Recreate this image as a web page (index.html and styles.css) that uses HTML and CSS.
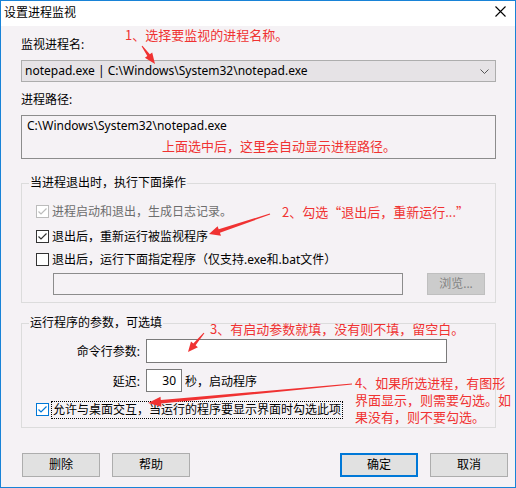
FILE: index.html
```html
<!DOCTYPE html>
<html lang="zh-CN">
<head>
    <meta charset="UTF-8">
    <title>设置进程监视</title>
    <link rel="stylesheet" href="styles.css">
</head>
<body>
    <div class="window">
        <div class="titlebar">
            <span class="title">设置进程监视</span>
            <svg class="close" width="11" height="11" viewBox="0 0 11 11">
                <path d="M0.5 0.5 L10.5 10.5 M10.5 0.5 L0.5 10.5" stroke="#000" stroke-width="1.1" fill="none"/>
            </svg>
        </div>

        <div class="content">
            <div class="label">监视进程名:</div>
            <div class="combo">
                <span>notepad.exe | C:\Windows\System32\notepad.exe</span>
                <svg width="9" height="5" viewBox="0 0 9 5">
                    <path d="M0.5 0.5 L4.5 4.5 L8.5 0.5" stroke="#555" stroke-width="1" fill="none"/>
                </svg>
            </div>

            <div class="label label-path">进程路径:</div>
            <div class="pathbox">
                <div>C:\Windows\System32\notepad.exe</div>
                <div class="note-inline">上面选中后，这里会自动显示进程路径。</div>
            </div>

            <div class="group group-exit">
                <div class="group-title">当进程退出时，执行下面操作</div>
                <div class="check-row row-log disabled">
                    <span class="box checked"><svg width="11" height="11" viewBox="0 0 11 11"><path d="M1.5 5.5 L4 8 L9.5 2.5" fill="none" stroke-width="1.2"/></svg></span>
                    <span class="text">进程启动和退出，生成日志记录。</span>
                </div>
                <div class="check-row row-restart">
                    <span class="box checked"><svg width="11" height="11" viewBox="0 0 11 11"><path d="M1.5 5.5 L4 8 L9.5 2.5" fill="none" stroke-width="1.2"/></svg></span>
                    <span class="text">退出后，重新运行被监视程序</span>
                </div>
                <div class="check-row row-run">
                    <span class="box"></span>
                    <span class="text">退出后，运行下面指定程序（仅支持.exe和.bat文件）</span>
                </div>
                <div class="file-row">
                    <div class="file-input"></div>
                    <div class="btn btn-disabled">浏览...</div>
                </div>
            </div>

            <div class="group group-args">
                <div class="group-title">运行程序的参数，可选填</div>
                <div class="field-row row-cmd">
                    <span class="field-label">命令行参数:</span>
                    <div class="input input-cmd"></div>
                </div>
                <div class="field-row row-delay">
                    <span class="field-label">延迟:</span>
                    <div class="input input-delay">30</div>
                    <span class="field-after">秒，启动程序</span>
                </div>
                <div class="check-row row-desktop focused">
                    <span class="box checked"><svg width="11" height="11" viewBox="0 0 11 11"><path d="M1.5 5.5 L4 8 L9.5 2.5" fill="none" stroke-width="1.2"/></svg></span>
                    <span class="text focus-text">允许与桌面交互，当运行的程序要显示界面时勾选此项</span>
                </div>
            </div>

            <div class="buttons">
                <div class="btn-group">
                    <div class="btn">删除</div>
                    <div class="btn">帮助</div>
                </div>
                <div class="btn-group">
                    <div class="btn btn-default">确定</div>
                    <div class="btn">取消</div>
                </div>
            </div>
        </div>

        <div class="annotations">
            <div class="note note1">1、选择要监视的进程名称。</div>
            <div class="note note2">2、勾选“退出后，重新运行...”</div>
            <div class="note note3">3、有启动参数就填，没有则不填，留空白。</div>
            <div class="note note4">4、如果所选进程，有图形<br>界面显示，则需要勾选。如<br>果没有，则不要勾选。</div>
            <svg class="arrows" width="516" height="488" viewBox="0 0 516 488">
                <polygon points="141.6,46.3 147.3,56 144.9,57.7 155,64 152.2,52.4 149.8,54.2 142.4,45.7"/>
                <polygon points="269.8,213.5 218.7,229.3 217.6,226.3 209,234 221,235.7 219.9,232.7 270.2,214.5"/>
                <polygon points="203.6,332.7 193.3,343.4 191,341.4 188,352 197.9,347.2 195.6,345.3 204.4,333.3"/>
                <polygon points="352,383.5 160.8,400 160.5,396.8 148,403 161.4,406.8 161.1,403.6 352,384.5"/>
            </svg>
        </div>
    </div>
</body>
</html>
```

FILE: styles.css
```css
body {
    margin: 0;
    font-family: "Noto Sans", "Noto Sans CJK SC", sans-serif;
    font-size: 12px;
    color: #000;
}
.window {
    position: relative;
    width: 516px;
    height: 488px;
    box-sizing: border-box;
    border: 1px solid #1883d7;
    background-color: #f5f2f5;
    overflow: hidden;
}
.titlebar {
    height: 25px;
    background-color: #fff;
    display: flex;
    align-items: center;
    justify-content: space-between;
    padding: 0 9px 0 3px;
}
.title {
    line-height: 24px;
    margin-top: -1px;
}
.close {
    margin-top: -4px;
}
.content {
    padding: 11px 19px 0 20px;
}
.label {
    line-height: 16px;
    height: 16px;
}
.combo {
    margin-top: 7px;
    height: 22px;
    box-sizing: border-box;
    border: 1px solid #adadad;
    background-color: #e6e3e6;
    display: flex;
    align-items: center;
    justify-content: space-between;
    padding: 0 6px 0 3px;
    line-height: 20px;
}
.label-path {
    margin-top: 10px;
}
.pathbox {
    margin-top: 7px;
    height: 44px;
    box-sizing: border-box;
    border: 1px solid #8c8c8c;
    padding: 2px 5px;
    line-height: 16px;
}
.note-inline {
    margin-top: 4px;
    padding-left: 135px;
    color: #f03232;
    font-family: "Noto Sans CJK SC", sans-serif;
    font-size: 13px;
}
.group {
    border: 1px solid #dcdcdc;
}
.group-exit {
    margin-top: 24px;
    padding-bottom: 7px;
}
.group-args {
    margin-top: 20px;
    padding-bottom: 8px;
}
.group-title {
    width: fit-content;
    margin: -9px 0 0 7px;
    padding: 0 1px;
    height: 16px;
    line-height: 16px;
    background-color: #f5f2f5;
}
.check-row {
    display: flex;
    align-items: flex-start;
    height: 16px;
    line-height: 16px;
}
.box {
    width: 13px;
    height: 13px;
    box-sizing: border-box;
    border: 1px solid #333;
    background-color: #fff;
    margin: 1px 0 0 14px;
    flex-shrink: 0;
}
.box svg {
    display: block;
}
.box path {
    stroke: #333;
}
.check-row .text {
    margin-left: 3px;
}
.disabled .box {
    border-color: #bcbcbc;
}
.disabled .box path {
    stroke: #bcbcbc;
}
.disabled .text {
    color: #6d6d6d;
}
.row-log {
    margin-top: 13px;
}
.row-restart {
    margin-top: 9px;
}
.row-run {
    margin-top: 7px;
}
.file-row {
    margin-top: 5px;
    padding-left: 31px;
    display: flex;
    gap: 24px;
}
.file-input {
    width: 350px;
    height: 22px;
    box-sizing: border-box;
    border: 1px solid #8c8c8c;
}
.btn {
    width: 78px;
    height: 24px;
    box-sizing: border-box;
    border: 1px solid #adadad;
    background-color: #e1e1e1;
    text-align: center;
    line-height: 22px;
}
.btn-disabled {
    width: 58px;
    height: 22px;
    line-height: 20px;
    background-color: #cccccc;
    border-color: #bfbfbf;
    color: #838383;
}
.btn-default {
    border: 2px solid #0078d7;
    line-height: 20px;
}
.field-row {
    display: flex;
    align-items: center;
}
.field-label {
    width: 118px;
    text-align: right;
    margin-right: 6px;
}
.input {
    box-sizing: border-box;
    border: 1px solid #7a7a7a;
    background-color: #fff;
}
.row-cmd {
    margin-top: 8px;
}
.input-cmd {
    width: 301px;
    height: 24px;
}
.row-delay {
    margin-top: 6px;
}
.input-delay {
    width: 36px;
    height: 23px;
    line-height: 21px;
    text-align: right;
    padding-right: 5px;
}
.field-after {
    margin-left: 3px;
}
.row-desktop {
    margin-top: 9px;
    height: 18px;
}
.row-desktop .box {
    margin-top: 2px;
    border-color: #0078d7;
}
.row-desktop .box path {
    stroke: #0078d7;
}
.row-desktop .focus-text {
    margin-left: 2px;
    border: 1px dotted #000;
    padding: 0 1px;
}
.buttons {
    margin: 25px -12px 0 1px;
    display: flex;
    justify-content: space-between;
}
.btn-group {
    display: flex;
    gap: 12px;
}
.annotations {
    position: absolute;
    top: -1px;
    left: -1px;
    width: 516px;
    height: 488px;
    pointer-events: none;
}
.note {
    position: absolute;
    color: #f03232;
    font-family: "Noto Sans CJK SC", sans-serif;
    font-size: 13px;
    line-height: 16px;
    white-space: nowrap;
}
.note1 {
    left: 125px;
    top: 27px;
}
.note2 {
    left: 282px;
    top: 204px;
}
.note3 {
    left: 210px;
    top: 321px;
}
.note4 {
    left: 355px;
    top: 374px;
    line-height: 17px;
}
.arrows {
    position: absolute;
    top: 0;
    left: 0;
}
.arrows polygon {
    fill: #f03232;
}
```
